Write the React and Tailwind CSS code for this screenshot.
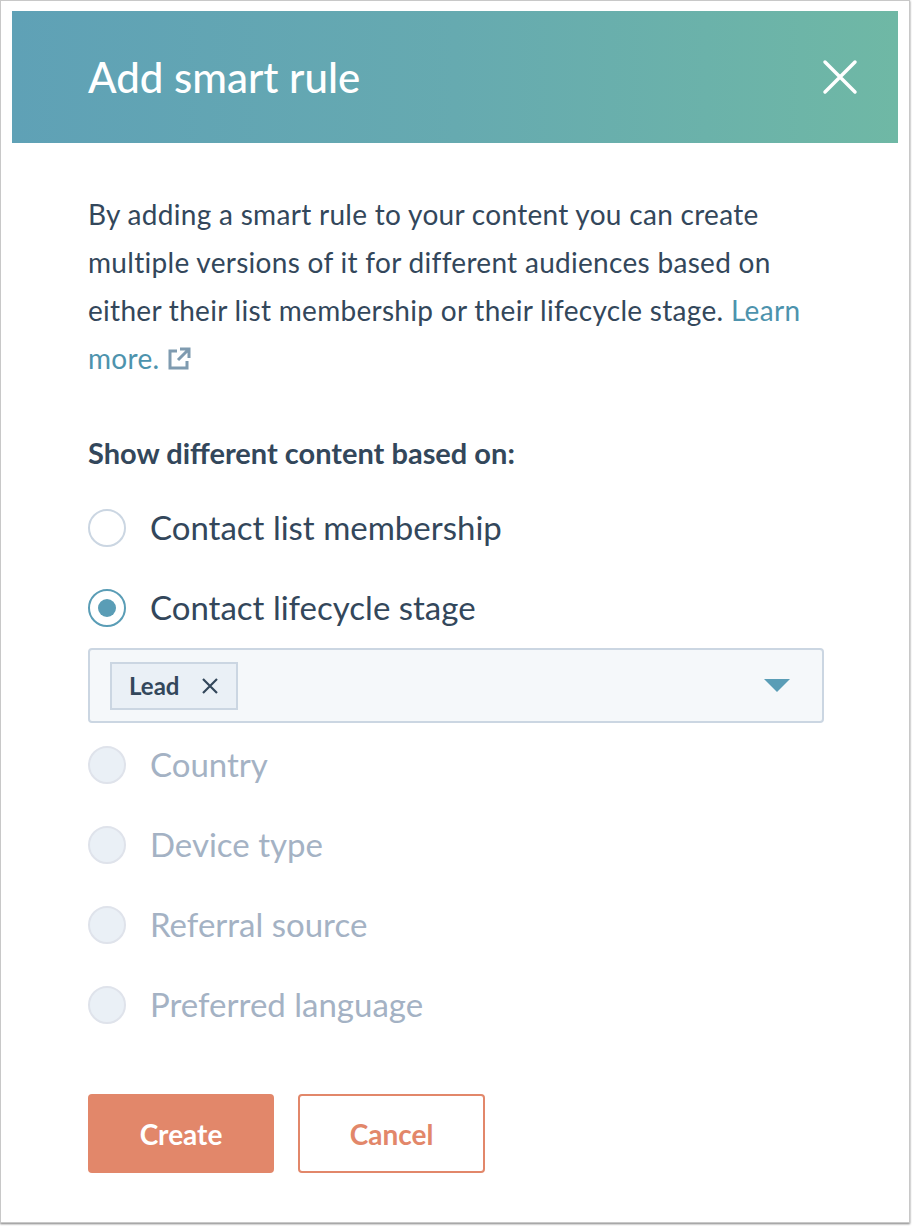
import React from "react";

function Radio({ checked, disabled, label }) {
  return (
    <div className="flex items-center gap-[24px] h-[80px]">
      <span className={"w-[38px] h-[38px] rounded-full border-2 flex items-center justify-center " + (checked ? "border-[#5a9db6] bg-white" : disabled ? "border-[#dfe3eb] bg-[#eaf0f6]" : "border-[#cbd6e2] bg-white")}>
        {checked && <span className="w-[18px] h-[18px] rounded-full bg-[#5a9db6]" />}
      </span>
      <span className={"text-[33px] " + (disabled ? "text-[#a4b2c4]" : "text-[#33475b]")}>{label}</span>
    </div>
  );
}

export default function App() {
  return (
    <div className="w-[912px] h-[1226px] bg-white" style={{ fontFamily: "Lato, 'Open Sans', sans-serif" }}>
      <div className="w-[910px] h-[1223px] border border-[#c8c8c8] bg-white shadow-[0_1px_2px_rgba(0,0,0,0.5)] pt-[10px] px-[11px]">
        <div className="h-[132px] flex items-center justify-between pl-[76px] pr-[40px] bg-gradient-to-r from-[#5fa1b6] via-[#66aab0] to-[#6fb8a5]">
          <h1 className="text-white text-[42px] font-medium">Add smart rule</h1>
          <svg width="36" height="36" viewBox="0 0 36 36" stroke="white" strokeWidth="3.5" strokeLinecap="round"><path d="M3 3L33 33M33 3L3 33" /></svg>
        </div>
        <div className="pl-[76px] pr-[74px] pt-[47px]">
          <p className="text-[28px] leading-[48px] text-[#33475b] tracking-[0.3px] whitespace-nowrap">
            By adding a smart rule to your content you can create<br />
            multiple versions of it for different audiences based on<br />
            either their list membership or their lifecycle stage. <span className="text-[#4d93ad]">Learn</span><br />
            <span className="text-[#4d93ad]">more.</span>{" "}
            <svg className="inline-block align-[-2px]" width="24" height="24" viewBox="0 0 24 24" fill="none" stroke="#7f9bb0" strokeWidth="3"><path d="M10 4H3v17h17v-7M13 2h9v9M22 2L11 13" /></svg>
          </p>
          <p className="mt-[53px] text-[29px] font-bold text-[#33475b] leading-[36px]">Show different content based on:</p>
          <div className="mt-[17px]">
            <Radio label="Contact list membership" />
            <Radio checked label="Contact lifecycle stage" />
            <div className="h-[75px] mb-[2px] rounded-[4px] border-2 border-[#cbd6e2] bg-[#f5f8fa] flex items-center justify-between pl-[20px] pr-[32px]">
              <span className="h-[48px] flex items-center gap-[22px] px-[17px] border-2 border-[#cbd6e2] bg-[#eaf0f6] text-[24px] font-bold text-[#33475b]">
                Lead
                <svg width="18" height="18" viewBox="0 0 18 18" stroke="#33475b" strokeWidth="2.2"><path d="M2 2L16 16M16 2L2 16" /></svg>
              </span>
              <svg width="26" height="14" viewBox="0 0 26 14"><path d="M0 0h26L13 13z" fill="#5a9db6" /></svg>
            </div>
            <Radio disabled label="Country" />
            <Radio disabled label="Device type" />
            <Radio disabled label="Referral source" />
            <Radio disabled label="Preferred language" />
          </div>
          <div className="mt-[49px] flex gap-[24px]">
            <button className="w-[186px] h-[79px] rounded-[4px] bg-[#e2876a] text-white text-[28px] font-bold">Create</button>
            <button className="w-[187px] h-[79px] rounded-[4px] border-2 border-[#e2876a] bg-white text-[#e2876a] text-[28px] font-bold">Cancel</button>
          </div>
        </div>
      </div>
    </div>
  );
}
